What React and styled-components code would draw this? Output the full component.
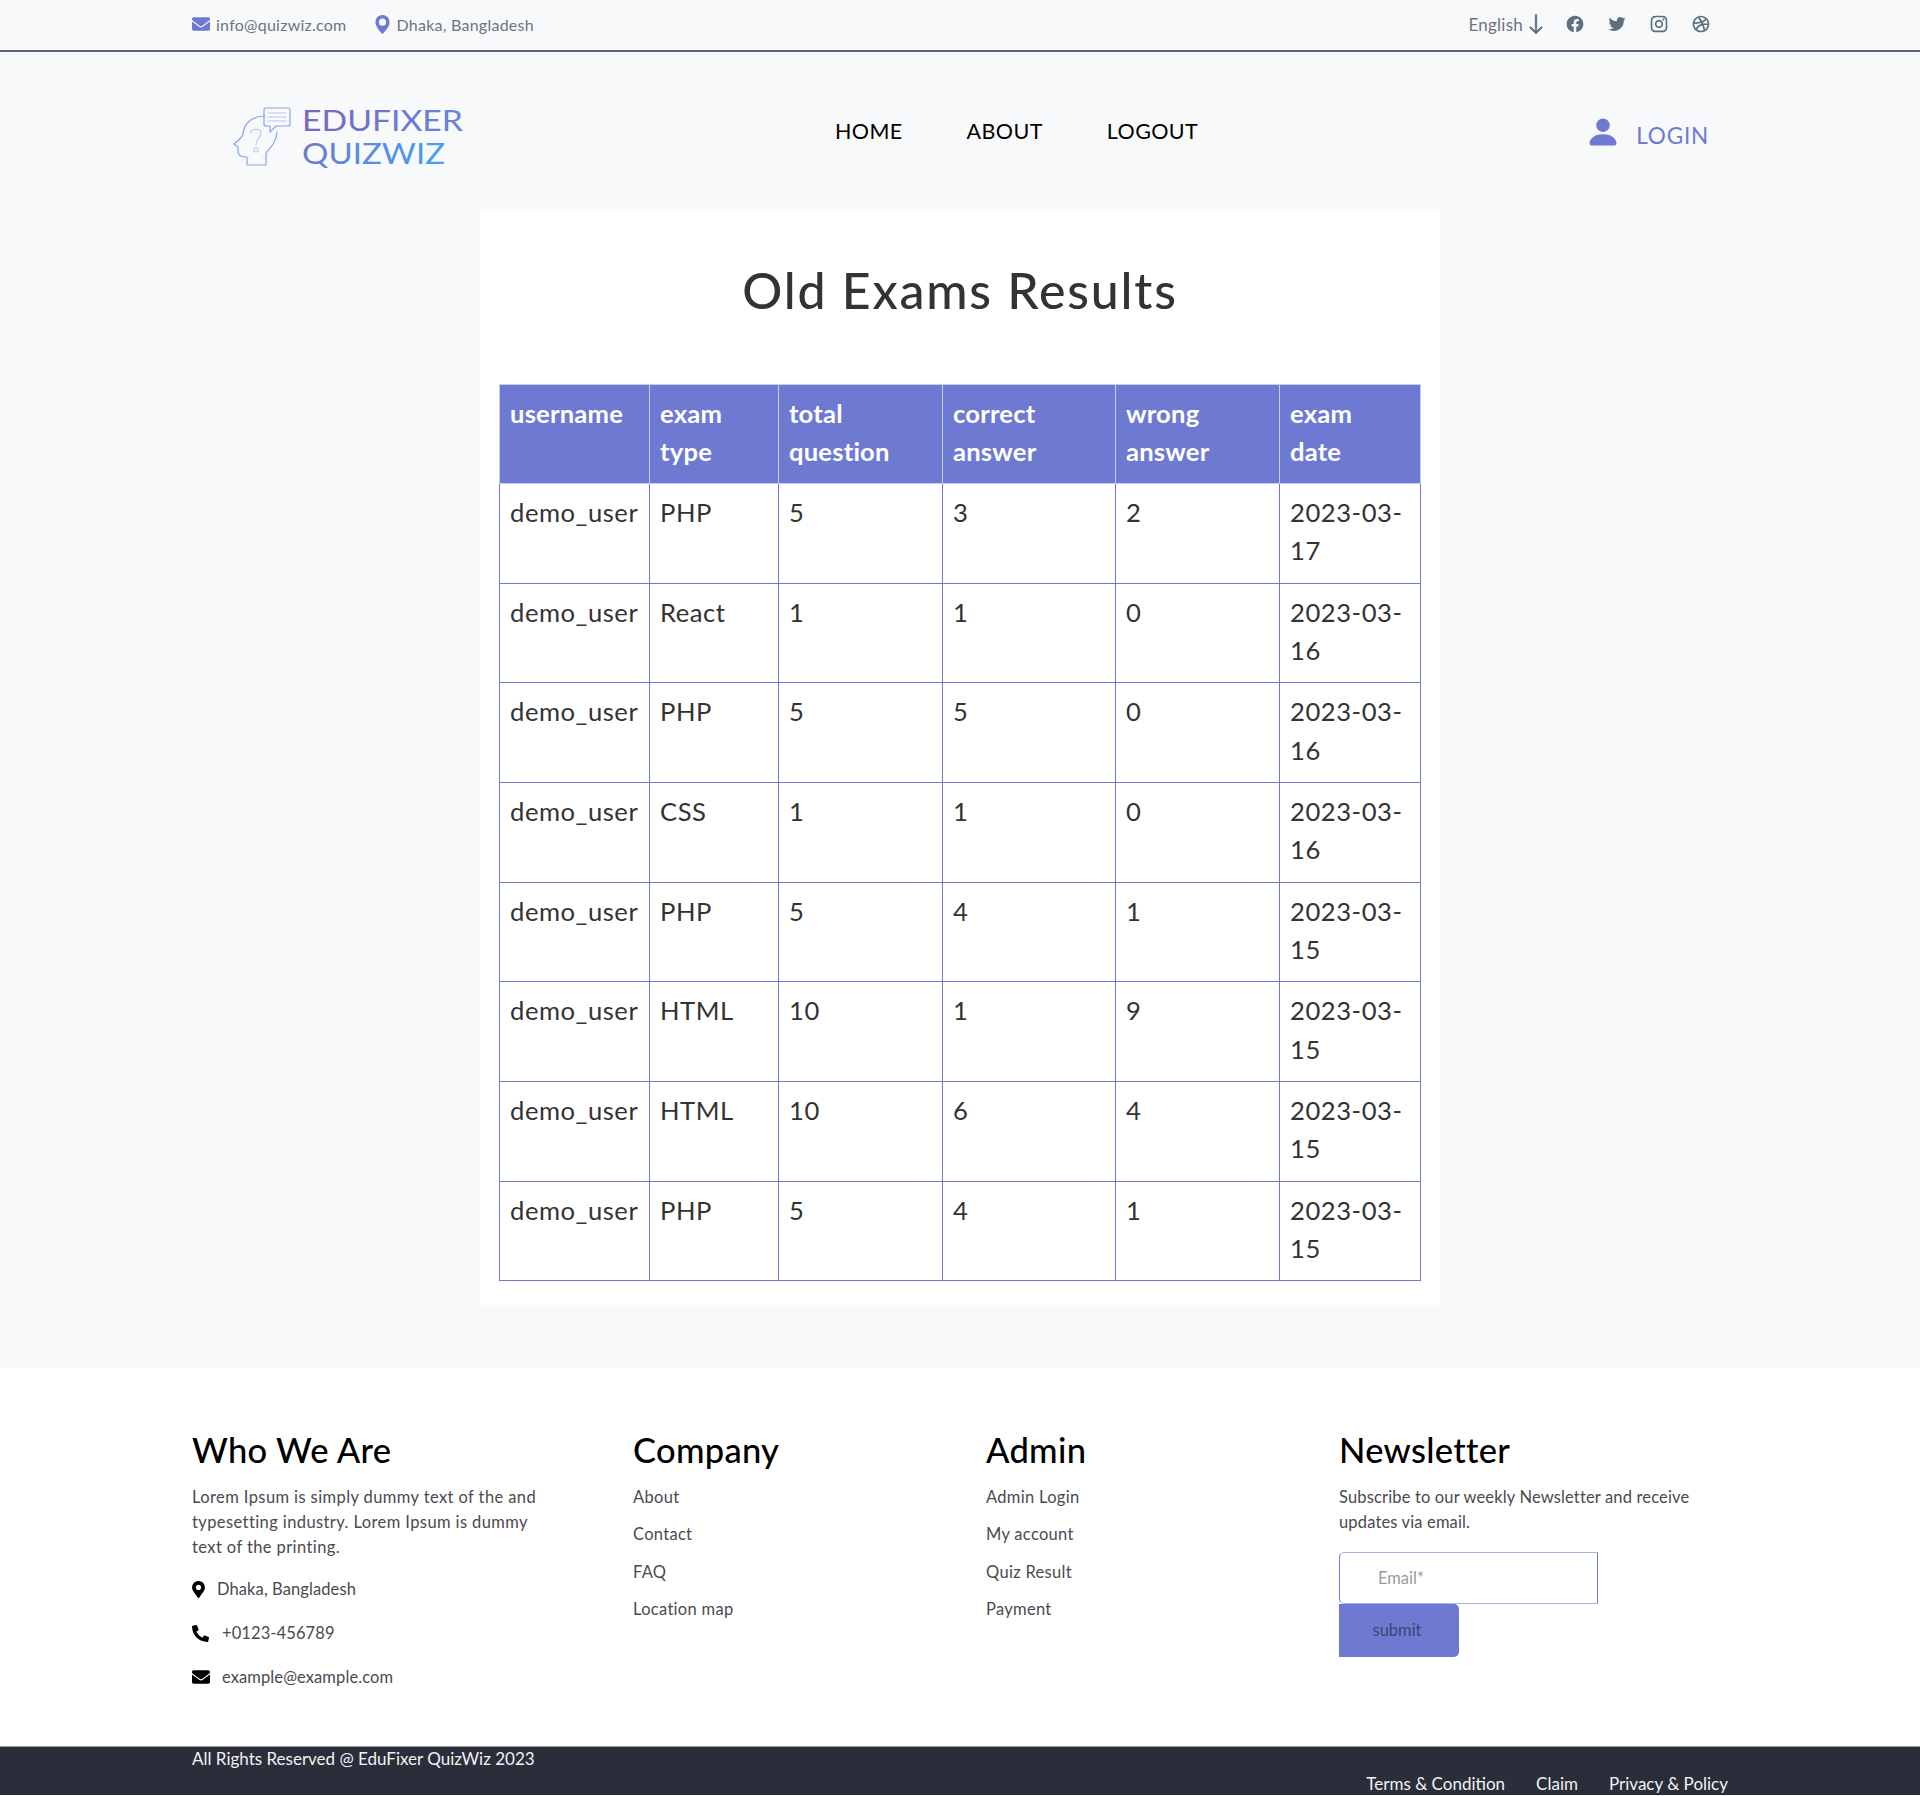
import React from "react";
import styled, { createGlobalStyle } from "styled-components";
import { BsGeoAltFill, BsArrowDown, BsPersonFill } from "react-icons/bs";
import { RiFacebookCircleFill, RiTwitterFill, RiInstagramLine, RiDribbbleLine } from "react-icons/ri";
import { FaMapMarkerAlt, FaPhoneAlt, FaEnvelope } from "react-icons/fa";

const FONT = `"Lato", "Open Sans", sans-serif`;
const ACCENT = "#6e7ad2";

const Global = createGlobalStyle`
  * { box-sizing: border-box; }
  html, body { margin: 0; padding: 0; }
  body { background: #f8f9fb; font-family: ${FONT}; color: #333; overflow-x: hidden; }
`;

const Page = styled.div`
  width: 1920px;
  height: 1796px;
  overflow: hidden;
  display: flex;
  flex-direction: column;
`;

const TopBar = styled.header`
  height: 52px;
  border-bottom: 2px solid #5c5f85;
  padding: 0 209px 2px 192px;
  display: flex;
  align-items: center;
  justify-content: space-between;
  color: #6c757d;
  letter-spacing: 0.25px;
`;

const TopGroup = styled.div`
  display: flex;
  align-items: center;
  gap: ${(p) => p.$gap}px;
  font-size: ${(p) => p.$font}px;
`;

const TopItem = styled.span`
  display: flex;
  align-items: center;
  gap: ${(p) => p.$gap || 6}px;
  margin-right: ${(p) => p.$mr || 0}px;
  svg {
    color: ${(p) => p.$icon || ACCENT};
    font-size: ${(p) => p.$size || 18}px;
    stroke: currentColor;
    stroke-width: ${(p) => p.$stroke || 0};
  }
`;

const SocialLink = styled.span`
  display: flex;
  color: #5a7080;
  font-size: 20px;
`;

const Nav = styled.nav`
  height: 159px;
  padding: 0 211px 0 233px;
  display: grid;
  grid-template-columns: 602px 1fr auto;
  align-items: center;
`;

const LogoSvg = styled.svg`
  display: block;
  width: 232px;
  height: 70px;
  margin-top: 8px;
`;

const NavLinks = styled.div`
  display: flex;
  gap: 64px;
  margin-top: -1px;
`;

const NavLink = styled.a`
  color: #000;
  font-size: 21.5px;
  letter-spacing: 0.4px;
`;

const Login = styled.a`
  display: flex;
  align-items: center;
  gap: 15px;
  margin-top: 7px;
  color: ${ACCENT};
  font-size: 22.5px;
  letter-spacing: 0.8px;
  svg { font-size: 36px; margin-top: -6px; }
`;

const Card = styled.main`
  width: 960px;
  height: 1094px;
  margin: 0 auto;
  padding: 0 19px;
  background: #fff;
`;

const Title = styled.h1`
  margin: 0;
  height: 173px;
  padding-top: 49px;
  text-align: center;
  font-size: 50px;
  line-height: 60px;
  font-weight: 500;
  letter-spacing: 1.8px;
  color: #333;
`;

const Table = styled.table`
  width: 921px;
  table-layout: fixed;
  border-collapse: collapse;
  font-size: 25.6px;
  line-height: 38.4px;
`;

const Th = styled.th`
  width: ${(p) => p.$w}px;
  padding: 9px 10px 12px;
  background: ${ACCENT};
  border: 1px solid #c9cde8;
  color: #fff;
  font-weight: 700;
  letter-spacing: 0.2px;
  text-align: left;
  vertical-align: top;
`;

const HeadLine = styled.span`
  display: block;
`;

const Td = styled.td`
  padding: 9px 10px 12.9px;
  border: 1px solid ${ACCENT};
  color: #333;
  font-weight: 400;
  letter-spacing: 0.55px;
  vertical-align: top;
`;

const Footer = styled.footer`
  margin-top: 63px;
  height: 378px;
  background: #fff;
  padding: 60px 0 0 192px;
  display: grid;
  grid-template-columns: 441px 353px 353px 380px;
`;

const FootTitle = styled.h3`
  margin: 0 0 13px;
  font-size: 34.5px;
  line-height: 44px;
  font-weight: 500;
  letter-spacing: 0.3px;
  color: #000;
`;

const FootText = styled.p`
  margin: 0 0 ${(p) => p.$mb || 0}px;
  width: ${(p) => p.$w}px;
  font-size: 16.5px;
  line-height: 25px;
  letter-spacing: ${(p) => p.$ls}px;
  color: #4a4a4f;
`;

const ContactRow = styled.div`
  display: flex;
  align-items: center;
  height: 24px;
  margin-bottom: 20px;
  gap: ${(p) => p.$gap}px;
  font-size: 16.5px;
  letter-spacing: 0.1px;
  color: #4a4a4f;
  svg {
    color: #000;
    font-size: ${(p) => p.$size}px;
    margin-left: ${(p) => p.$ml || 0}px;
  }
`;

const FootLinks = styled.div`
  display: flex;
  flex-direction: column;
  gap: 12.3px;
`;

const FootLink = styled.a`
  font-size: 16.5px;
  line-height: 25px;
  letter-spacing: 0.3px;
  color: #4a4a4f;
`;

const EmailInput = styled.input`
  display: block;
  width: 259px;
  height: 52px;
  padding: 0 38px;
  border: 1px solid #aab1e6;
  border-right-color: ${ACCENT};
  border-left-color: ${ACCENT};
  border-radius: 5px 0 0 5px;
  font: 16.5px ${FONT};
  background: #fff;
  &::placeholder { color: #9a9a9a; }
`;

const Submit = styled.button`
  display: block;
  width: 120px;
  height: 53px;
  padding: 0 4px 2px 0;
  border: 0;
  border-radius: 0 5px 5px 0;
  background: ${ACCENT};
  color: #41446f;
  font: 16.5px ${FONT};
`;

const BottomBar = styled.div`
  height: 49px;
  background: #2a2d3a;
  border-top: 1px solid #9a9a9a;
  padding: 0 192px 0 192px;
  display: flex;
  justify-content: space-between;
  color: #f2f2f2;
  font-size: 17px;
  line-height: 24px;
`;

const BottomLinks = styled.div`
  display: flex;
  gap: 31px;
  padding-top: 25px;
`;

const head = [
  [["username"], 150], [["exam", "type"], 129], [["total", "question"], 164],
  [["correct", "answer"], 173], [["wrong", "answer"], 164], [["exam", "date"], 141],
];

const rows = [
  ["PHP", 5, 3, 2, "2023-03-17"],
  ["React", 1, 1, 0, "2023-03-16"],
  ["PHP", 5, 5, 0, "2023-03-16"],
  ["CSS", 1, 1, 0, "2023-03-16"],
  ["PHP", 5, 4, 1, "2023-03-15"],
  ["HTML", 10, 1, 9, "2023-03-15"],
  ["HTML", 10, 6, 4, "2023-03-15"],
  ["PHP", 5, 4, 1, "2023-03-15"],
];

function Logo() {
  return (
    <LogoSvg viewBox="0 -6 232 70" aria-label="EduFixer QuizWiz">
      <defs>
        <linearGradient id="lg1" x1="0" x2="1" y1="0" y2="0">
          <stop offset="0" stopColor="#7a67b8" />
          <stop offset="1" stopColor="#6585dc" />
        </linearGradient>
        <linearGradient id="lg2" x1="0" x2="1" y1="0" y2="0">
          <stop offset="0" stopColor="#6a7cc8" />
          <stop offset="1" stopColor="#45a0f5" />
        </linearGradient>
      </defs>
      <g fill="none" stroke="#86a5ee" strokeWidth="1.2" strokeLinejoin="round" strokeLinecap="round">
        <path d="M32 9 C18 9 11 17 10 27 C9 31 6 33 1 37 L5 40 L5 45 C6 49 8 50 14 50 L14 58 L33 58 L33 46 C39 39 43 35 44 25" />
        <path d="M33 1 H55 Q57 1 57 3 V17 Q57 19 55 19 H43 L37 25 V19 H33 Q31 19 31 17 V3 Q31 1 33 1 Z" />
        <path d="M35 6 H53 M35 10 H53 M35 14 H53" stroke="#b9c8f2" />
        <path d="M18 26 C18 21 28 21 28 26 C28 31 23 31 23 38" stroke="#b9c8f2" />
        <circle cx="23" cy="43" r="2" stroke="#b9c8f2" />
      </g>
      <text x="69" y="24" fontFamily="Lato, sans-serif" fontWeight="400" fontSize="28" textLength="161" lengthAdjust="spacingAndGlyphs" fill="url(#lg1)">EDUFIXER</text>
      <text x="69" y="57" fontFamily="Lato, sans-serif" fontWeight="400" fontSize="28" textLength="143" lengthAdjust="spacingAndGlyphs" fill="url(#lg2)">QUIZWIZ</text>
    </LogoSvg>
  );
}

export default function App() {
  return (
    <Page>
      <Global />
      <TopBar>
        <TopGroup $gap={26} $font={16}>
          <TopItem><FaEnvelope />info@quizwiz.com</TopItem>
          <TopItem $gap={5} $size={19}><BsGeoAltFill />Dhaka, Bangladesh</TopItem>
        </TopGroup>
        <TopGroup $gap={22} $font={17}>
          <TopItem $gap={2} $mr={-4} $icon="#5a7080" $size={22} $stroke={0.6}>English<BsArrowDown /></TopItem>
          <SocialLink><RiFacebookCircleFill /></SocialLink>
          <SocialLink><RiTwitterFill /></SocialLink>
          <SocialLink><RiInstagramLine /></SocialLink>
          <SocialLink><RiDribbbleLine /></SocialLink>
        </TopGroup>
      </TopBar>
      <Nav>
        <Logo />
        <NavLinks>
          <NavLink>HOME</NavLink>
          <NavLink>ABOUT</NavLink>
          <NavLink>LOGOUT</NavLink>
        </NavLinks>
        <Login><BsPersonFill />LOGIN</Login>
      </Nav>
      <Card>
        <Title>Old Exams Results</Title>
        <Table>
          <thead>
            <tr>
              {head.map(([lines, w]) => (
                <Th key={lines.join(" ")} $w={w}>
                  {lines.map((l) => <HeadLine key={l}>{l}</HeadLine>)}
                </Th>
              ))}
            </tr>
          </thead>
          <tbody>
            {rows.map((r, i) => (
              <tr key={i}>
                <Td>demo_user</Td>
                {r.map((c, j) => <Td key={j}>{c}</Td>)}
              </tr>
            ))}
          </tbody>
        </Table>
      </Card>
      <Footer>
        <div>
          <FootTitle>Who We Are</FootTitle>
          <FootText $w={360} $mb={17} $ls={0.4}>Lorem Ipsum is simply dummy text of the and typesetting industry. Lorem Ipsum is dummy text of the printing.</FootText>
          <ContactRow $gap={10} $size={17} $ml={-2}><FaMapMarkerAlt />Dhaka, Bangladesh</ContactRow>
          <ContactRow $gap={13} $size={17}><FaPhoneAlt />+0123-456789</ContactRow>
          <ContactRow $gap={12} $size={18}><FaEnvelope />example@example.com</ContactRow>
        </div>
        <div>
          <FootTitle>Company</FootTitle>
          <FootLinks>
            <FootLink>About</FootLink>
            <FootLink>Contact</FootLink>
            <FootLink>FAQ</FootLink>
            <FootLink>Location map</FootLink>
          </FootLinks>
        </div>
        <div>
          <FootTitle>Admin</FootTitle>
          <FootLinks>
            <FootLink>Admin Login</FootLink>
            <FootLink>My account</FootLink>
            <FootLink>Quiz Result</FootLink>
            <FootLink>Payment</FootLink>
          </FootLinks>
        </div>
        <div>
          <FootTitle>Newsletter</FootTitle>
          <FootText $w={370} $mb={17} $ls={0.15}>Subscribe to our weekly Newsletter and receive updates via email.</FootText>
          <EmailInput placeholder="Email*" />
          <Submit>submit</Submit>
        </div>
      </Footer>
      <BottomBar>
        <span>All Rights Reserved @ EduFixer QuizWiz 2023</span>
        <BottomLinks>
          <span>Terms &amp; Condition</span>
          <span>Claim</span>
          <span>Privacy &amp; Policy</span>
        </BottomLinks>
      </BottomBar>
    </Page>
  );
}
